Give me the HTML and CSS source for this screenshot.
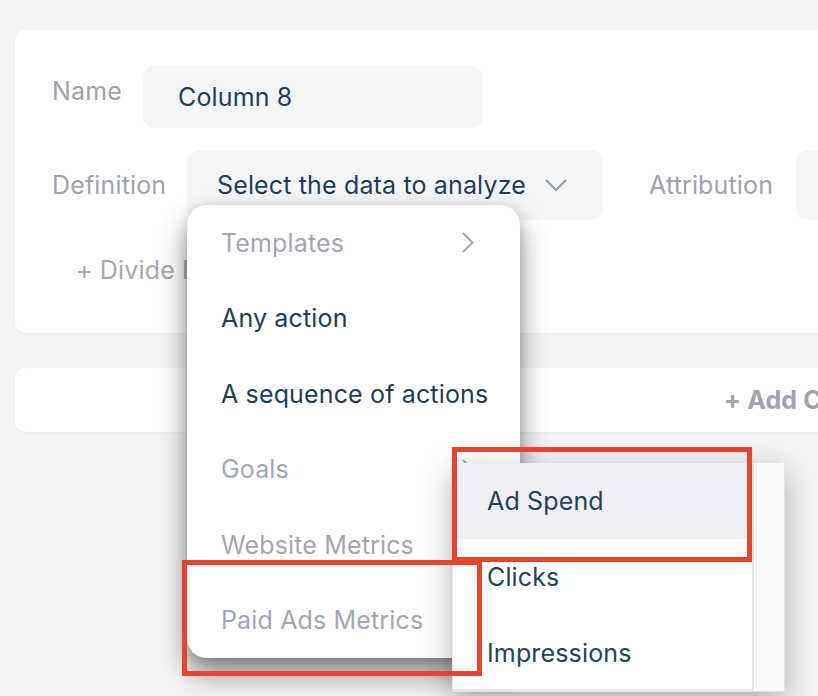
FILE: index.html
```html
<!DOCTYPE html>
<html lang="en">
<head>
<meta charset="utf-8">
<title>Column editor</title>
<link rel="stylesheet" href="styles.css">
</head>
<body>
<div class="page">
  <section class="card editor">
    <div class="row row-name">
      <span class="label label-name">Name</span>
      <div class="input name-input">Column 8</div>
    </div>
    <div class="row row-def">
      <span class="label label-def">Definition</span>
      <div class="input select">
        <span>Select the data to analyze</span>
        <svg class="caret" width="22" height="13" viewBox="0 0 22 13"><polyline points="1.5,1.5 11,11 20.5,1.5" fill="none" stroke="#9c9eac" stroke-width="2.2" stroke-linecap="round" stroke-linejoin="round"/></svg>
      </div>
      <span class="label label-attr">Attribution</span>
      <div class="input attr-input"></div>
    </div>
    <div class="divide">+ Divide By</div>
  </section>
  <section class="card add-card">
    <span class="add">+ Add C</span>
  </section>

  <div class="menu">
    <div class="item muted"><span>Templates</span>
      <svg class="chev" width="12" height="21" viewBox="0 0 12 21"><polyline points="1.5,1.5 10.5,10.5 1.5,19.5" fill="none" stroke="#a3a5b4" stroke-width="2" stroke-linecap="round" stroke-linejoin="round"/></svg>
    </div>
    <div class="item">Any action</div>
    <div class="item">A sequence of actions</div>
    <div class="item muted"><span>Goals</span>
      <svg class="chev" width="12" height="21" viewBox="0 0 12 21"><polyline points="1.5,1.5 10.5,10.5 1.5,19.5" fill="none" stroke="#a3a5b4" stroke-width="2" stroke-linecap="round" stroke-linejoin="round"/></svg>
    </div>
    <div class="item muted">Website Metrics</div>
    <div class="item muted">Paid Ads Metrics</div>
  </div>

  <div class="submenu">
    <div class="sub-list">
      <div class="sub-item active">Ad Spend</div>
      <div class="sub-item">Clicks</div>
      <div class="sub-item">Impressions</div>
    </div>
    <div class="scroll-track"></div>
  </div>

  <div class="mark mark-top"></div>
  <div class="mark mark-bottom"></div>
</div>
</body>
</html>
```
FILE: styles.css
```css
html, body {
  margin: 0;
  padding: 0;
  overflow: hidden;
}
body {
  background: #f3f4f6;
  font-family: Inter, "Noto Sans", "Liberation Sans", sans-serif;
  font-size: 25px;
  letter-spacing: 0.15px;
  line-height: 30px;
  color: #1f3d56;
}
.page {
  position: relative;
  width: 818px;
  height: 696px;
  padding: 30px 0 0 15px;
  box-sizing: border-box;
  white-space: nowrap;
}
.card {
  background: #fff;
  border-radius: 10px;
  width: 1000px;
  box-shadow: 0 1px 3px rgba(20, 30, 50, 0.04);
}
.editor {
  padding: 36px 0 48px 37px;
  box-sizing: border-box;
  height: 303px;
}
.row {
  display: flex;
}
.row-name {
  align-items: flex-start;
}
.row-def {
  margin-top: 22px;
  align-items: center;
}
.label {
  color: #a0a1b0;
}
.label-name {
  width: 91px;
  margin-top: 10px;
}
.label-def {
  width: 135px;
}
.label-attr {
  margin-left: 46px;
  width: 147px;
}
.input {
  background: #f4f5f7;
  border-radius: 12px;
  box-sizing: border-box;
  display: flex;
  align-items: center;
}
.name-input {
  width: 340px;
  height: 62px;
  padding-left: 35px;
}
.select {
  width: 416px;
  height: 70px;
  padding-left: 30px;
  gap: 19px;
}
.caret {
  margin-top: 1px;
}
.attr-input {
  width: 200px;
  height: 70px;
}
.divide {
  margin-top: 35px;
  padding-left: 24px;
  color: #a6a7b5;
}
.add-card {
  margin-top: 35px;
  height: 64px;
  display: flex;
  align-items: center;
  padding-left: 709px;
  box-sizing: border-box;
}
.add {
  font-weight: 700;
  color: #a0a2b0;
}
.menu {
  position: absolute;
  left: 187px;
  top: 205px;
  width: 333px;
  height: 453px;
  background: #fff;
  border-radius: 20px;
  box-shadow: 0 16px 28px rgba(0, 0, 0, 0.45), 0 2px 12px rgba(0, 0, 0, 0.12);
  z-index: 2;
}
.item {
  height: 75.5px;
  box-sizing: border-box;
  padding: 0 46px 0 34px;
  display: flex;
  align-items: center;
  justify-content: space-between;
  color: #1f3d56;
}
.item.muted {
  color: #a3a5b4;
}
.chev {
  flex: none;
}
.submenu {
  position: absolute;
  left: 452px;
  top: 463px;
  width: 333px;
  height: 229px;
  background: #fff;
  border: 1px solid #e4e4e6;
  border-top: none;
  box-sizing: border-box;
  display: flex;
  box-shadow: 0 10px 30px rgba(0, 0, 0, 0.3);
  z-index: 3;
}
.sub-list {
  flex: 1;
  border-bottom: 2px solid #e6e6e8;
  border-right: 2px solid #e6e6e8;
}
.sub-item {
  height: 76px;
  display: flex;
  align-items: center;
  padding-left: 34px;
  color: #22435c;
}
.sub-item.active {
  background: #efeff4;
}
.scroll-track {
  width: 27px;
  background: #fafafa;
  border-left: 1px solid #ececee;
  margin-left: 2px;
}
.mark {
  position: absolute;
  border: 5px solid #e8442b;
  box-sizing: border-box;
  z-index: 5;
}
.mark-top {
  left: 452px;
  top: 447px;
  width: 300px;
  height: 115px;
}
.mark-bottom {
  left: 182px;
  top: 560px;
  width: 300px;
  height: 116px;
}
```
